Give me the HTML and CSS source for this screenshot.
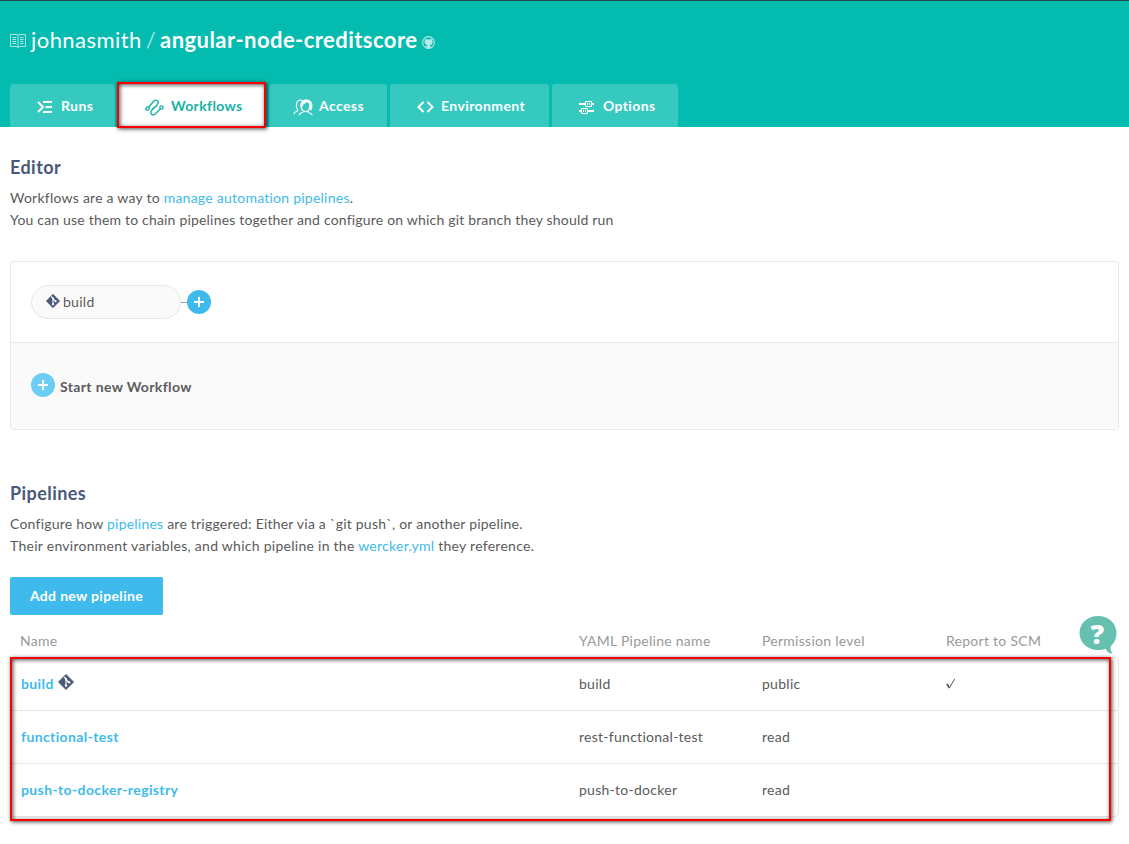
FILE: index.html
```html
<!DOCTYPE html>
<html lang="en">
<head>
<meta charset="utf-8">
<title>angular-node-creditscore - Workflows</title>
<link rel="stylesheet" href="styles.css">
</head>
<body>
<svg class="defs" width="0" height="0" aria-hidden="true">
  <symbol id="git" viewBox="0 0 16 16">
    <path d="M8 .4 15.6 8 8 15.6.4 8z" fill="#49597a" stroke="#49597a" stroke-width=".8" stroke-linejoin="round"/>
    <path d="M6 2.8l2 2V12M8 5.4l3 3" stroke="#fff" stroke-width="1.2" fill="none"/>
    <circle cx="8" cy="5.2" r="1.1" fill="#fff"/><circle cx="8" cy="11.6" r="1.2" fill="#fff"/><circle cx="11" cy="8.3" r="1.2" fill="#fff"/>
  </symbol>
  <symbol id="plus" viewBox="0 0 24 24">
    <path d="M12 7v10M7 12h10" stroke="#fff" stroke-width="2" fill="none"/>
  </symbol>
</svg>
<header class="header">
  <h1 class="title">
    <svg class="book" width="16" height="16" viewBox="0 0 16 16" fill="none" stroke="#fff"><path d="M.5 1.500h5.500Q8 1.500 8 2.500 8 1.500 10 1.500h5.500v12H10Q8 13.500 8 15 8 13.500 6 13.500H.5zM8 2v12.500"/><path d="M2.500 4.500h3.500M2.500 6.500h3.500M2.500 8.500h3.500M2.500 10.500h3.500M10 4.500h3.500M10 6.500h3.500M10 8.500h3.500M10 10.500h3.500"/></svg>
    <span class="owner">johnasmith</span><span class="slash">/</span><span class="repo">angular-node-creditscore</span>
    <svg class="github" width="13" height="13" viewBox="0 0 16 16"><circle cx="8" cy="8" r="7.200" fill="none" stroke="#fff" stroke-width="1.300"/><path fill="#fff" d="M3.700 3.200l2.200 1q2-.5 4.200 0l2.200-1q.5 1 .2 2.100.8 1 .7 2.300-.2 3-3.200 3.400.5.600.5 1.500v2.500H6v-1.500q-1.500.2-2.200-1.500 1.500.7 2.200.2 0-.8.400-1.200-3.100-.5-3.300-3.400 0-1.300.7-2.300-.3-1-.1-2.100z"/></svg>
  </h1>
  <nav class="tabs">
    <a class="tab runs"><svg width="16" height="14" viewBox="0 0 16 14" fill="none" stroke="#fff" stroke-width="2"><path d="M1 2l5 5-5 5M6 2h9M8.500 7H15M6 12h9"/></svg>Runs</a>
    <a class="tab active"><svg width="19" height="17" viewBox="0 0 19 17" fill="none" stroke="#16b2a5" stroke-width="1.400"><circle cx="2.500" cy="9.500" r="1.600"/><circle cx="16.500" cy="8.500" r="1.600"/><path d="M3.600 8.300 8.800 2.100q1.900-1.800 3.700-.3 1.500 1.700-.1 3.600L9 9.200q-1 .9-2 0M15.400 9.700 10.200 14.900q-1.900 1.700-3.700.2-1.500-1.700.1-3.600L10 7.800q1-.9 2 0"/></svg>Workflows</a>
    <a class="tab access"><svg width="21" height="17" viewBox="0 0 21 17" fill="none" stroke="#fff" stroke-width="1.100"><path d="M.8 15.200q.2-2 2.500-2.700 2-.7 1.300-1.900Q2.800 8 3.500 4.500 4.500 1 8 1l1.700.6M6 16.300q.5-2.300 3-2.700 1.600-.5 1.200-1.800-2.400-2-2.200-5.300M15 11.800q-.4 1.400 1 1.900 2.700.6 3.300 2.600M10.200 11.800q2.400 1.800 4.800 0 2-2 2-5.800"/><path fill="#fff" stroke-width=".7" d="M7.700 7.500Q7.800.8 13 .8q6.500.2 6 6.500.2 2.700-1.200 4-.2-5-1.400-6.900-1.400-1-2.800-1.600-1.600 1.800-3.600 2.300l-1 3z"/></svg>Access</a>
    <a class="tab environment"><svg width="17" height="12" viewBox="0 0 17 12" fill="none" stroke="#fff" stroke-width="2"><path d="M6.500 1l-5 5 5 5M10.500 1l5 5-5 5"/></svg>Environment</a>
    <a class="tab options"><svg width="15" height="13" viewBox="0 0 15 13" fill="none" stroke="#fff"><path d="M0 3h6M13 3h2M0 10h2M9 10h6" stroke-width="2"/><path d="M6.500.5h6v5h-6zM2.500 7.500h6v5h-6zM8.500 2v2M10.500 2v2M4.500 9v2M6.500 9v2"/></svg>Options</a>
    <span class="mark mark-tab"></span>
  </nav>
</header>
<main class="main">
  <section>
    <h2>Editor</h2>
    <p class="intro"><span class="lead">Workflows are a way to <a>manage automation pipelines</a>.</span><br>You can use them to chain pipelines together and configure on which git branch they should run</p>
    <div class="editor">
      <div class="flow">
        <div class="node"><svg width="14" height="14"><use href="#git"/></svg>build</div>
        <span class="link"></span>
        <svg class="add" width="24" height="24"><use href="#plus"/></svg>
      </div>
      <div class="start"><svg class="add light" width="24" height="24"><use href="#plus"/></svg><strong>Start new Workflow</strong></div>
    </div>
  </section>
  <section class="pipelines">
    <h2>Pipelines</h2>
    <p><span class="trigger">Configure how <a>pipelines</a> are triggered: Either via a `git push`, or another pipeline.</span><br>Their environment variables, and which pipeline in the <a>wercker.yml</a> they reference.</p>
    <button class="button">Add new pipeline</button>
    <div class="row head"><span>Name</span><span>YAML Pipeline name</span><span>Permission level</span><span>Report to SCM</span></div>
    <div class="table">
      <div class="row"><span class="name">build<svg width="16" height="16"><use href="#git"/></svg></span><span>build</span><span>public</span><span><svg class="check" width="10" height="12" viewBox="0 0 10 12" fill="none" stroke="#555"><path d="M.3 6.800 1.800 6 3.300 10 8.800.800"/><path d="M1.200 6.500 3.200 10.300" stroke-width="1.300"/></svg></span></div>
      <div class="row"><span class="name">functional-test</span><span>rest-functional-test</span><span>read</span><span></span></div>
      <div class="row"><span class="name">push-to-docker-registry</span><span>push-to-docker</span><span>read</span><span></span></div>
      <span class="mark mark-table"></span>
    </div>
  </section>
</main>
<div class="help"><svg width="38" height="38" viewBox="0 0 38 38"><path fill="#66c0b0" d="M19 0C8.800 0 .5 7.200.5 17S8.800 34 19 34q4.500 0 8-1.300 1 4.600 6 4.800 1.300 0 .3-.8-2.500-2-1.500-6.500 5.700-5 5.700-13.200C37.500 7.200 29.200 0 19 0z"/></svg><span>?</span></div>
</body>
</html>
```
FILE: styles.css
```css
* { box-sizing: border-box; }
body { margin: 0; background: #fff; color: #5a5a5a; font: 14px/22px Lato, sans-serif; letter-spacing: .27px; position: relative; height: 844px; overflow: hidden; }
svg { display: block; flex: none; }
.defs { position: absolute; }
.header { height: 127px; background: #03bbaf; border-top: 1px solid #26464a; display: flex; flex-direction: column; justify-content: space-between; padding: 24px 10px 0; }
.title { margin: 0; display: flex; align-items: center; color: #fff; font-size: 22px; line-height: 30px; font-weight: 400; letter-spacing: .44px; }
.book { margin: 2px 5px 0 0; opacity: .65; }
.slash { margin: 0 4px 0 4px; opacity: .6; }
.repo { font-weight: 700; }
.github { margin: 4px 0 0 5px; opacity: .7; }
.tabs { display: flex; gap: 3px; height: 43px; position: relative; }
.tab { display: flex; align-items: center; gap: 8px; height: 43px; padding: 1px 0 0 27px; border-radius: 3px 3px 0 0; background: #36c9c0; color: #fff; font-weight: 700; letter-spacing: .4px; }
.tab svg { margin-top: 2px; }
.runs { width: 105px; }
.active { width: 148px; background: #fff; color: #16b2a5; gap: 7px; letter-spacing: .36px; }
.access { width: 118px; padding-left: 24px; gap: 5px; }
.environment { width: 159px; gap: 7px; }
.options { width: 126px; gap: 9px; letter-spacing: .36px; }
.mark { position: absolute; border: 2px solid #f90000; box-shadow: 1px 1px 4px rgba(0,0,0,.7), inset 1px 1px 4px rgba(0,0,0,.7); pointer-events: none; }
.mark-tab { left: 107px; top: -2px; width: 149px; height: 46px; }
.main { padding: 29px 10px 0; }
h2 { margin: 0 0 9px; color: #49597a; font-size: 18px; line-height: 22px; font-weight: 700; letter-spacing: .44px; }
p { margin: 0; }
.intro { letter-spacing: .19px; }
.lead { letter-spacing: .24px; }
.trigger { letter-spacing: .22px; }
.main a { color: #3ebbec; }
.editor { margin-top: 30px; height: 169px; border: 1px solid #e8eaea; border-radius: 3px; overflow: hidden; }
.flow { height: 81px; padding-left: 20px; display: flex; align-items: center; border-bottom: 1px solid #e5e7e7; }
.node { width: 150px; height: 34px; padding-left: 14px; border: 1px solid #e5e7e7; border-radius: 17px; background: #fafafa; display: flex; align-items: center; gap: 3px; }
.node svg { margin-top: -3px; }
.link { width: 6px; height: 1px; background: #999; }
.add { border-radius: 50%; background: #3ebbec; }
.start { height: 87px; padding: 0 0 4px 20px; background: #fafafa; display: flex; align-items: center; gap: 5px; }
.start strong { padding-top: 4px; letter-spacing: .36px; }
.light { background: #6ccdf2; }
.pipelines { padding-top: 52px; }
.button { display: block; width: 153px; height: 38px; margin-top: 20px; border: 0; border-radius: 2px; background: #3ebbec; color: #fff; font: 700 14px/22px Lato, sans-serif; letter-spacing: .33px; padding: 0; }
.row { display: grid; grid-template-columns: 558px 183px 184px 1fr; height: 53px; padding-left: 10px; align-items: center; }
.table .row { border-bottom: 1px solid #e5e8e8; }
.row.head { height: 42px; padding-top: 10px; color: #999; grid-template-columns: 559px 183px 184px 1fr; }
.table { position: relative; border: 1px solid #e5e8e8; border-radius: 4px; }
.table .row:nth-child(3) { border-bottom: 0; height: 52px; }
.name { color: #3ebbec; font-weight: 700; display: flex; gap: 4px; align-items: center; letter-spacing: .38px; }
.name svg { margin-top: -5px; }
.mark-table { left: -1px; top: -1px; width: 1101px; height: 164px; }
.help { position: absolute; left: 1078.5px; top: 616px; color: #fff; }
.help span { position: absolute; left: 0; top: 3px; width: 38px; text-align: center; font: 900 27px/30px "Open Sans", sans-serif; }
```
